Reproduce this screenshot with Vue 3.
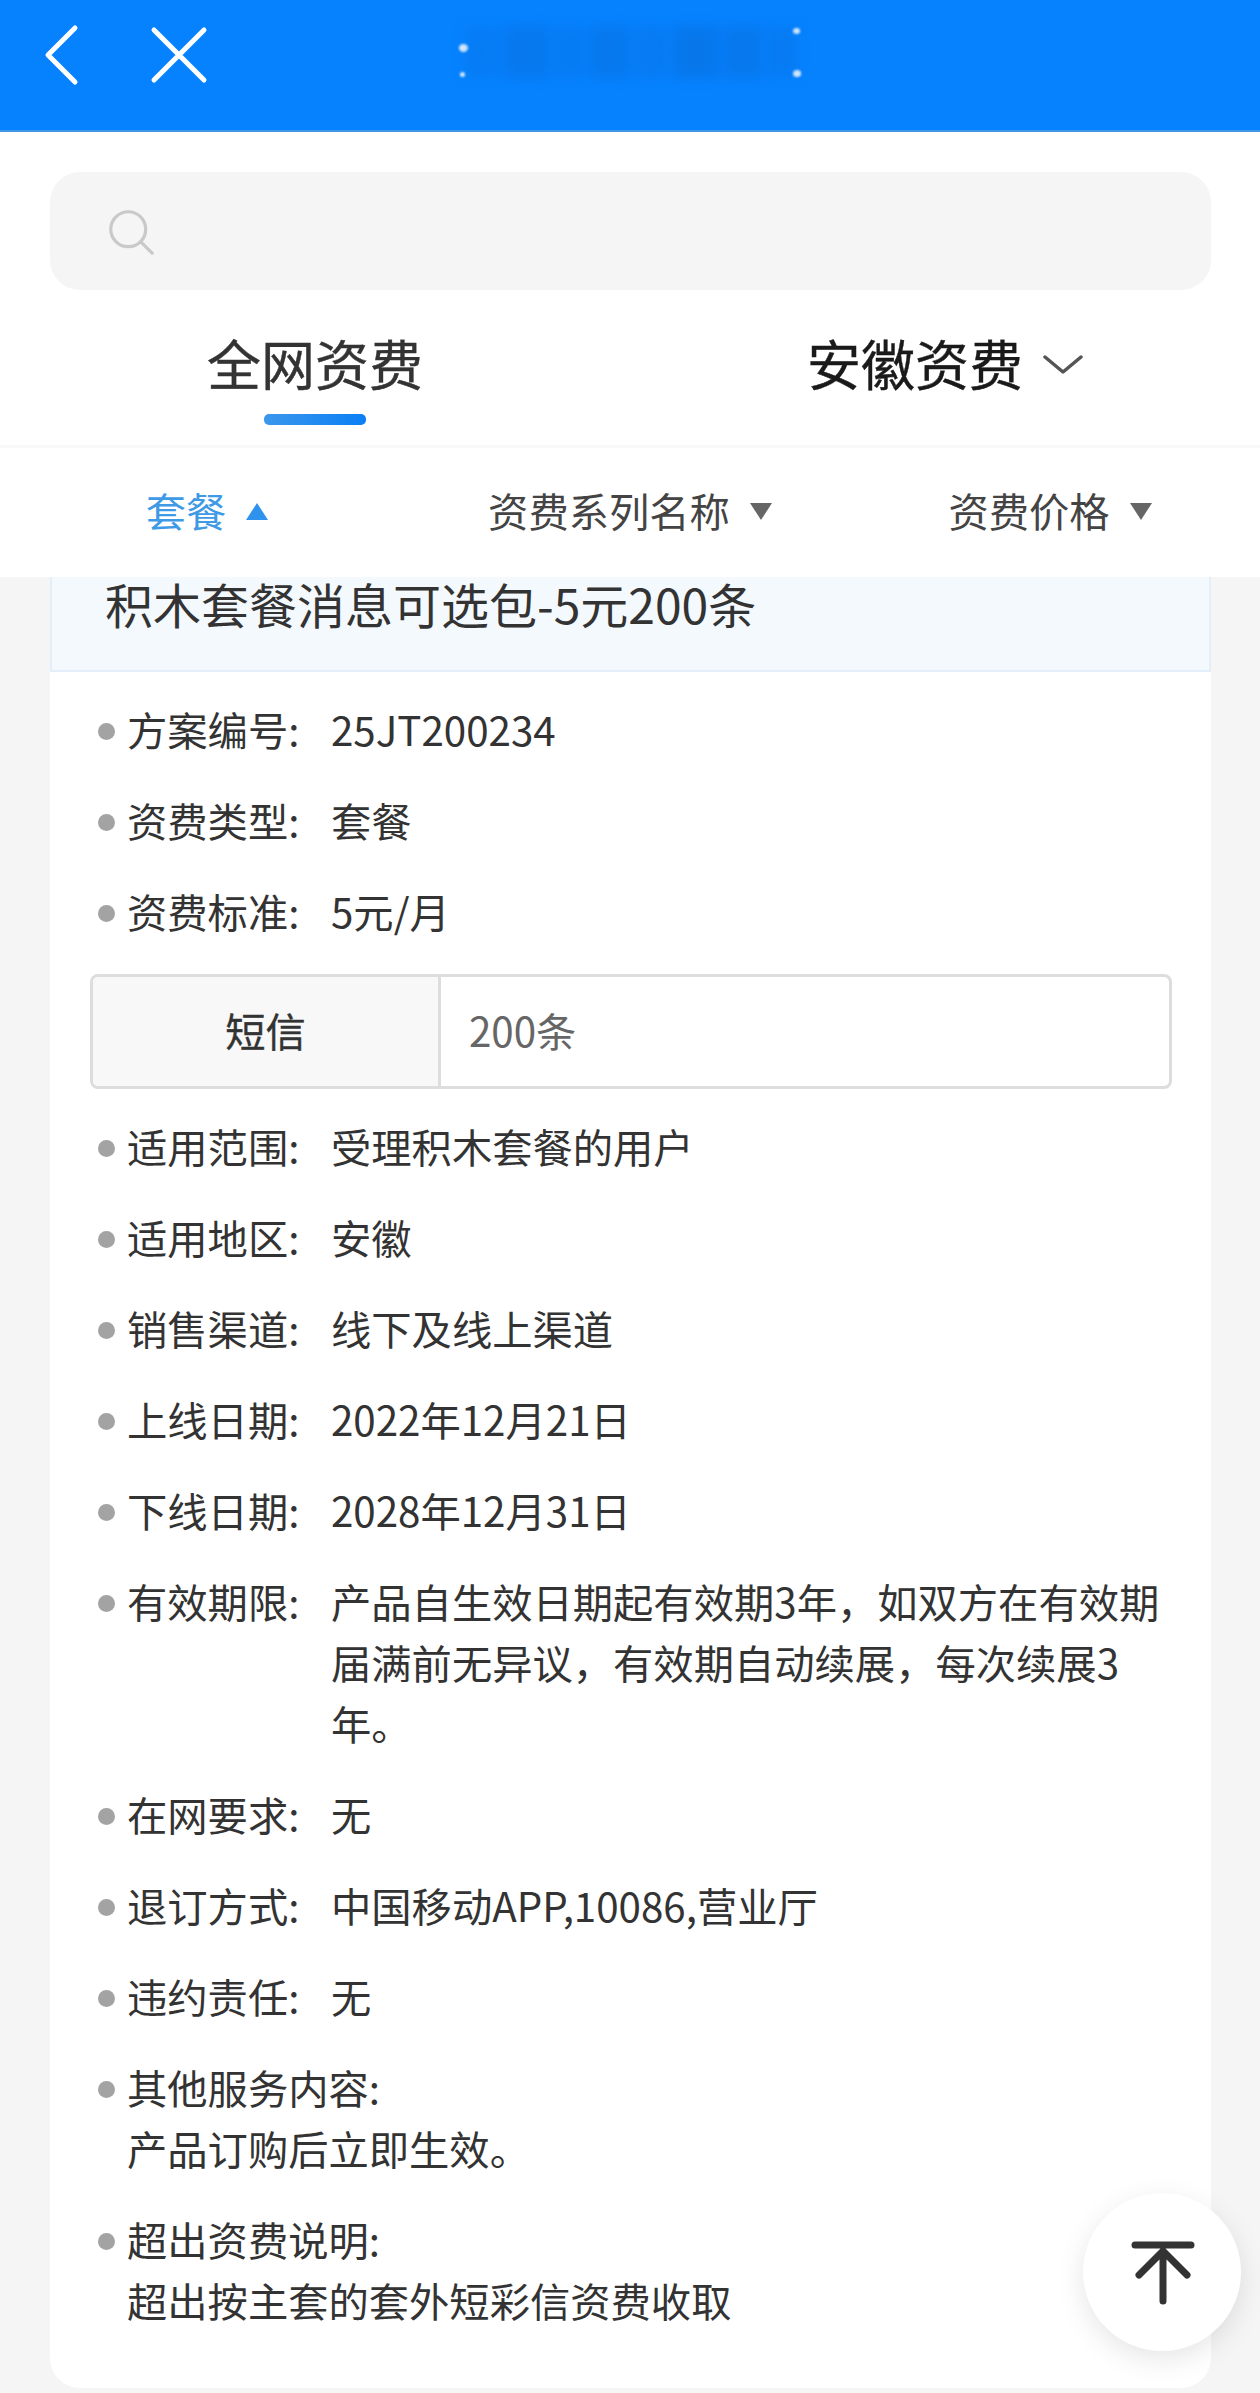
<script setup>
const rowsA = [
  { label: '方案编号:', value: '25JT200234' },
  { label: '资费类型:', value: '套餐' },
  { label: '资费标准:', value: '5元/月' },
]
const rowsB = [
  { label: '适用范围:', value: '受理积木套餐的用户' },
  { label: '适用地区:', value: '安徽' },
  { label: '销售渠道:', value: '线下及线上渠道' },
  { label: '上线日期:', value: '2022年12月21日' },
  { label: '下线日期:', value: '2028年12月31日' },
  { label: '有效期限:', value: '产品自生效日期起有效期3年，如双方在有效期届满前无异议，有效期自动续展，每次续展3年。' },
  { label: '在网要求:', value: '无' },
  { label: '退订方式:', value: '中国移动APP,10086,营业厅' },
  { label: '违约责任:', value: '无' },
]
const notes = [
  { label: '其他服务内容:', value: '产品订购后立即生效。' },
  { label: '超出资费说明:', value: '超出按主套的套外短彩信资费收取' },
]
const filters = [
  { label: '套餐', up: true },
  { label: '资费系列名称', up: false },
  { label: '资费价格', up: false },
]
const blurs = [
  { w: 36, o: 0.16 }, { w: 44, o: 0.28 }, { w: 30, o: 0.18 }, { w: 40, o: 0.28 },
  { w: 34, o: 0.2 }, { w: 46, o: 0.32 }, { w: 38, o: 0.28 }, { w: 30, o: 0.2 },
]
</script>

<template>
  <div class="page">
    <header class="nav">
      <svg class="nav-icon back" viewBox="0 0 40 64" width="40" height="64">
        <path d="M33 5 L6 32 L33 59" />
      </svg>
      <svg class="nav-icon close" viewBox="0 0 60 60" width="60" height="60">
        <path d="M5 5 L55 55 M55 5 L5 55" />
      </svg>
      <div class="blurred" aria-hidden="true">
        <i class="speck s1"></i><i class="speck s2"></i><i class="speck s3"></i><i class="speck s4"></i>
        <span v-for="(b, i) in blurs" :key="i" class="smudge" :style="{ width: b.w + 'px', opacity: b.o }"></span>
      </div>
    </header>

    <section class="top">
      <div class="search">
        <svg viewBox="0 0 50 50" width="46" height="46">
          <circle cx="22" cy="22" r="19" />
          <path d="M36 36 L48 48" />
        </svg>
      </div>
      <div class="tabs">
        <div class="tab active">
          <span>全网资费</span>
          <i class="underline"></i>
        </div>
        <div class="tab">
          <span class="tab-row">
            <span class="tab-dark">安徽资费</span>
            <svg viewBox="0 0 40 20" width="40" height="20"><path d="M2 2 L20 17 L38 2" /></svg>
          </span>
        </div>
      </div>
    </section>

    <section class="filters">
      <div v-for="f in filters" :key="f.label" class="filter" :class="{ on: f.up }">
        <span>{{ f.label }}</span>
        <i class="tri" :class="f.up ? 'up' : 'down'"></i>
      </div>
    </section>

    <main class="card">
      <h2 class="title">积木套餐消息可选包-5元200条</h2>
      <div class="body">
        <div v-for="r in rowsA" :key="r.label" class="row">
          <i class="dot"></i>
          <span class="label">{{ r.label }}</span>
          <span class="value">{{ r.value }}</span>
        </div>
        <div class="table">
          <div class="th">短信</div>
          <div class="td">200条</div>
        </div>
        <div v-for="r in rowsB" :key="r.label" class="row">
          <i class="dot"></i>
          <span class="label">{{ r.label }}</span>
          <span class="value">{{ r.value }}</span>
        </div>
        <div v-for="n in notes" :key="n.label" class="row">
          <i class="dot"></i>
          <div class="note">
            <div>{{ n.label }}</div>
            <div>{{ n.value }}</div>
          </div>
        </div>
      </div>
    </main>

    <button class="fab" type="button" aria-label="top">
      <svg viewBox="0 0 64 64" width="64" height="64">
        <path d="M4 4 L60 4 M32 10 L8 34 M32 10 L56 34 M32 10 L32 60" />
      </svg>
    </button>
  </div>
</template>

<style scoped>
.page {
  position: relative;
  width: 1260px;
  height: 2393px;
  overflow: hidden;
  background: #f5f5f5;
  color: #333;
  font-family: "Noto Sans CJK SC", "Noto Sans", sans-serif;
  font-size: 40.3px;
  line-height: 61px;
}
.nav {
  position: relative;
  height: 132px;
  box-sizing: border-box;
  background: #0682ff;
  border-bottom: 2px solid #3f97e6;
  display: flex;
  align-items: flex-start;
  padding: 23px 0 0 42px;
}
.nav-icon path {
  fill: none;
  stroke: #fff;
  stroke-width: 5;
  stroke-linecap: round;
  stroke-linejoin: round;
}
.close {
  margin: 2px 0 0 67px;
}
.blurred {
  position: absolute;
  left: 458px;
  top: 22px;
  width: 345px;
  height: 60px;
  display: flex;
  align-items: stretch;
  justify-content: space-between;
  padding: 4px 6px;
  box-sizing: border-box;
}
.smudge {
  display: block;
  background: #0a5fc0;
  filter: blur(7px);
}
.speck {
  position: absolute;
  width: 9px;
  height: 7px;
  border-radius: 50%;
  background: #dff1ff;
  filter: blur(1px);
}
.s1 { left: 1px; top: 22px; width: 9px; height: 8px; }
.s2 { left: 2px; top: 50px; width: 5px; height: 5px; }
.s3 { right: 3px; top: 6px; width: 7px; height: 6px; }
.s4 { right: 2px; top: 48px; width: 8px; height: 7px; }

.top {
  background: #fff;
  padding-top: 40px;
}
.search {
  margin: 0 49px 0 50px;
  height: 118px;
  border-radius: 30px;
  background: #f5f5f5;
  display: flex;
  align-items: center;
  padding-left: 58px;
}
.search svg {
  margin-top: 2px;
}
.search circle,
.search path {
  fill: none;
  stroke: #c9c9c9;
  stroke-width: 3.5;
  stroke-linecap: round;
}
.tabs {
  display: grid;
  grid-template-columns: 1fr 1fr;
  height: 155px;
}
.tab {
  position: relative;
  display: flex;
  justify-content: center;
  padding-top: 38px;
  font-size: 54px;
  line-height: 70px;
}
.active {
  color: #333;
  -webkit-text-stroke: 0.4px #333;
}
.tab-row {
  display: flex;
  align-items: center;
  gap: 20px;
  height: 70px;
}
.tab-dark {
  color: #1a1a1a;
  -webkit-text-stroke: 0.4px #1a1a1a;
}
.tab-row svg {
  margin-top: 4px;
}
.tab-row svg path {
  fill: none;
  stroke: #555;
  stroke-width: 3.5;
  stroke-linecap: round;
  stroke-linejoin: round;
}
.underline {
  position: absolute;
  left: 50%;
  top: 124px;
  width: 102px;
  height: 11px;
  margin-left: -51px;
  border-radius: 5px;
  background: linear-gradient(90deg, #3a97ec, #0a7ff5);
}
.filters {
  display: grid;
  grid-template-columns: repeat(3, 1fr);
  height: 129px;
  border-top: 3px solid #f9f9f9;
  box-sizing: content-box;
  background: #fff;
}
.filter {
  display: flex;
  align-items: center;
  justify-content: center;
  gap: 20px;
  color: #444;
  padding-bottom: 6px;
}
.filter.on {
  color: #3f9ae6;
  padding-right: 6px;
}
.tri {
  display: block;
  width: 0;
  height: 0;
  border-left: 11px solid transparent;
  border-right: 11px solid transparent;
}
.tri.down {
  border-top: 17px solid #666;
  margin-top: 4px;
}
.tri.up {
  border-bottom: 17px solid #2f93ee;
  margin-top: 4px;
}
.card {
  margin: 0 49px 0 50px;
  height: 1811px;
  background: #fff;
  border-radius: 0 0 30px 30px;
}
.title {
  margin: 0;
  padding: 0 0 39px 53px;
  height: 95px;
  box-sizing: border-box;
  background: #f4f9fe;
  border: 2px solid #e2effb;
  border-top: 0;
  font-size: 48px;
  font-weight: 400;
  line-height: 52px;
  color: #333;
  white-space: nowrap;
}
.body {
  padding: 26px 40px 0 48px;
}
.row {
  display: flex;
  align-items: flex-start;
  margin-bottom: 30px;
}
.dot {
  flex: none;
  width: 17px;
  height: 17px;
  margin: 25px 12px 0 0;
  border-radius: 50%;
  background: #a3a3a3;
}
.label {
  flex: none;
  width: 204px;
}
.value {
  flex: 1;
  min-width: 0;
}
.table {
  margin: 33px -1px 26px -8px;
  height: 115px;
  box-sizing: border-box;
  border: 3px solid #ddd;
  border-radius: 8px;
  display: flex;
  overflow: hidden;
}
.th {
  width: 348px;
  flex: none;
  box-sizing: border-box;
  display: flex;
  align-items: center;
  justify-content: center;
  padding-bottom: 4px;
  background: #f8f8f8;
  border-right: 3px solid #ddd;
  -webkit-text-stroke: 0.3px #333;
}
.td {
  flex: 1;
  display: flex;
  align-items: center;
  padding: 0 0 4px 28px;
  color: #666;
}
.fab {
  position: absolute;
  right: 19px;
  bottom: 42px;
  width: 158px;
  height: 158px;
  padding: 0;
  border: 0;
  border-radius: 50%;
  background: #fff;
  box-shadow: 0 8px 28px rgba(0, 0, 0, 0.1);
  display: flex;
  align-items: center;
  justify-content: center;
}
.fab svg {
  margin: 2px 0 0 2px;
}
.fab path {
  fill: none;
  stroke: #333;
  stroke-width: 7;
  stroke-linecap: round;
  stroke-linejoin: round;
}
</style>
